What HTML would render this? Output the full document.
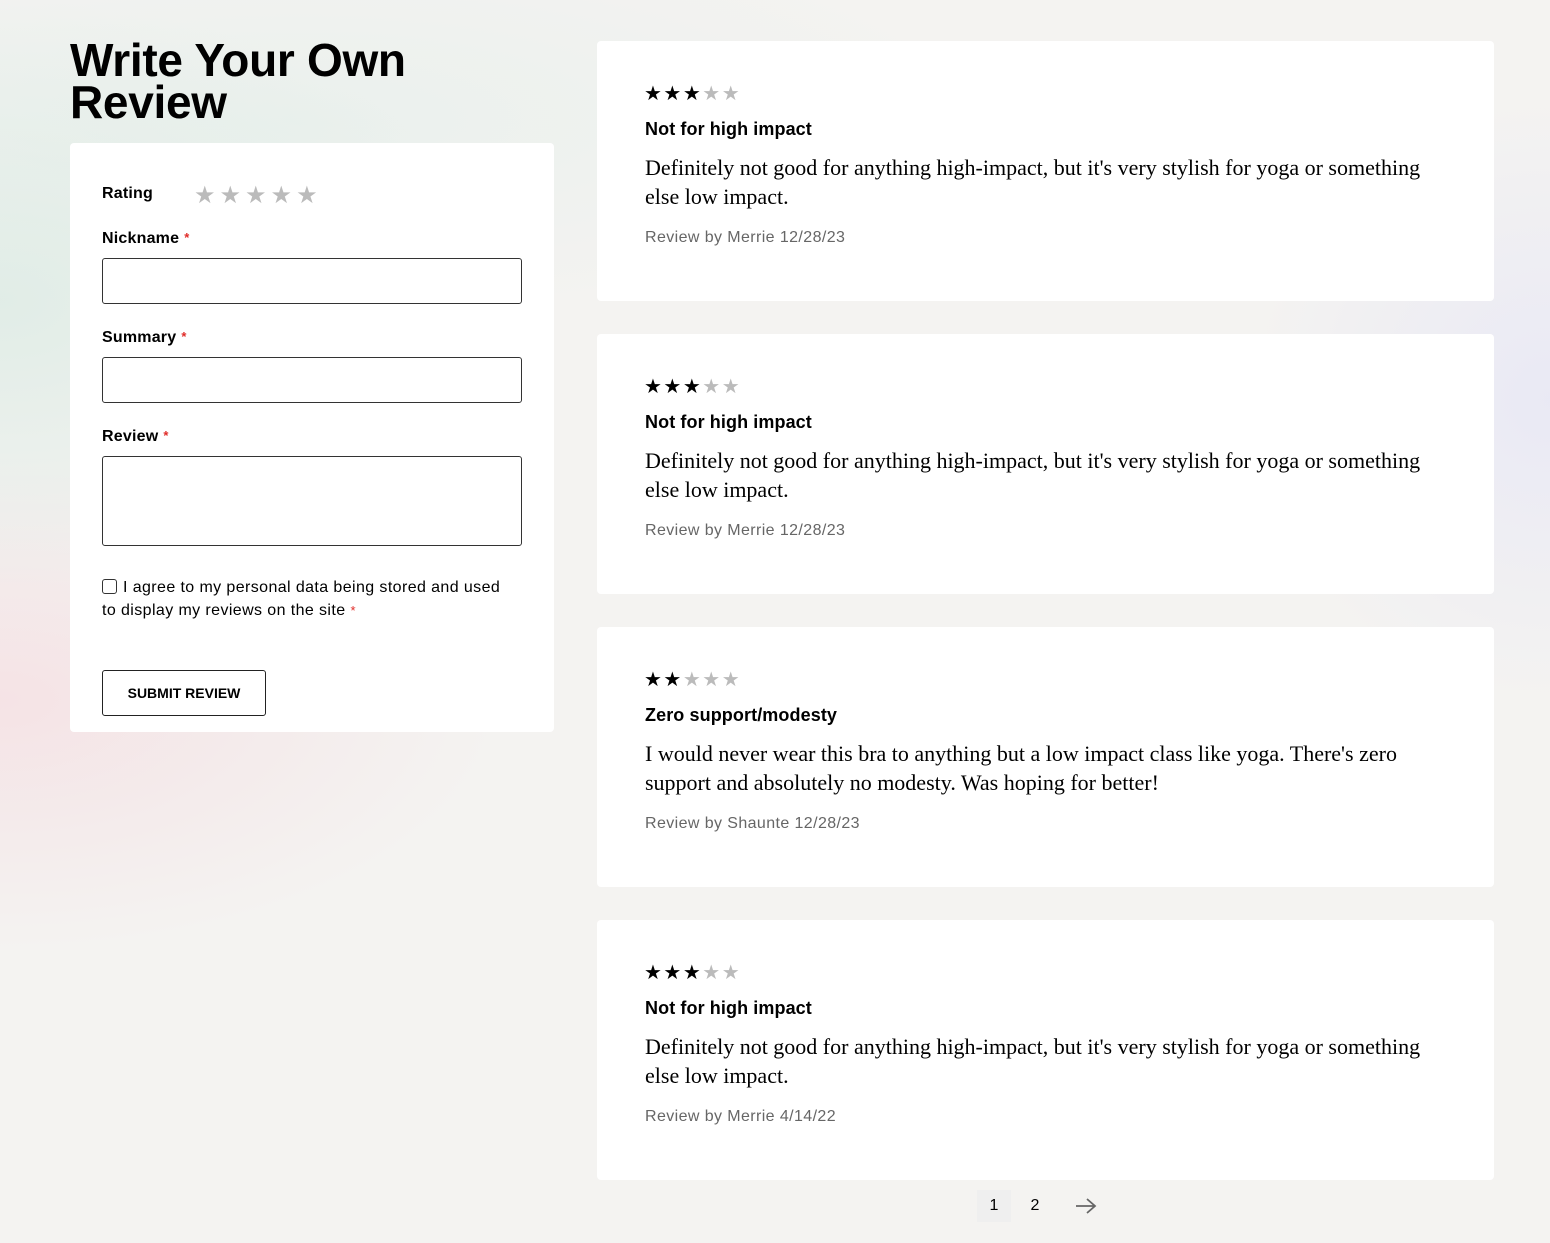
<!DOCTYPE html>
<html><head><meta charset="utf-8"><style>
*{box-sizing:border-box;margin:0;padding:0}
body{width:1550px;height:1243px;overflow:hidden;font-family:"Liberation Sans",sans-serif;color:#000;
background:
radial-gradient(ellipse 500px 300px at 0px 300px,rgba(220,235,228,.8),transparent),
radial-gradient(ellipse 500px 250px at 0px 700px,rgba(245,225,228,.9),transparent),
radial-gradient(ellipse 300px 300px at 1550px 400px,rgba(232,232,245,.9),transparent),
radial-gradient(ellipse 700px 200px at 300px 120px,rgba(232,240,236,.8),transparent),
#f4f3f1;position:relative}
h1{position:absolute;left:70px;top:39px;font-size:46px;line-height:42px;font-weight:bold;letter-spacing:-.3px}
.form{position:absolute;left:70px;top:143px;width:484px;height:589px;background:#fff;border-radius:4px}
.lbl{position:absolute;left:32px;font-size:16px;font-weight:bold;letter-spacing:.2px}
.req{color:#e02b27;font-size:13px;margin-left:5px;vertical-align:top}
.inp{position:absolute;left:32px;width:420px;height:46px;border:1px solid #333;border-radius:3px}
.gstars{position:absolute;left:124px;top:38px;color:#bbb;font-size:24px;letter-spacing:4px}
.card{position:absolute;left:597px;width:897px;height:260px;background:#fff;border-radius:4px}
.st{position:absolute;left:47px;top:40px;font-size:20px;letter-spacing:1.5px}
.st .o{color:#bbb}
.t{position:absolute;left:48px;top:78px;font-size:18px;font-weight:bold;letter-spacing:.1px}
.b{position:absolute;left:48px;top:112px;width:790px;font-family:"Liberation Serif",serif;font-size:22px;line-height:29px}
.m{position:absolute;left:48px;top:188px;font-size:16px;color:#666;letter-spacing:.4px}
.btn{position:absolute;left:32px;top:527px;width:164px;height:46px;border:1px solid #222;border-radius:3px;font-size:14px;font-weight:bold;text-align:center;line-height:44px}
</style></head><body>
<h1>Write Your Own<br>Review</h1>
<div class="form">
<div class="lbl" style="top:42px">Rating</div>
<div class="gstars">★★★★★</div>
<div class="lbl" style="top:87px">Nickname<span class="req">*</span></div>
<div class="inp" style="top:115px"></div>
<div class="lbl" style="top:186px">Summary<span class="req">*</span></div>
<div class="inp" style="top:214px"></div>
<div class="lbl" style="top:285px">Review<span class="req">*</span></div>
<div class="inp" style="top:313px;height:90px"></div>
<div style="position:absolute;left:32px;top:436px;width:15px;height:15px;border:1px solid #333;border-radius:3px"></div>
<div style="position:absolute;left:32px;top:433px;width:408px;font-size:16px;line-height:23px;text-indent:21px;letter-spacing:.4px">I agree to my personal data being stored and used to display my reviews on the site<span class="req">*</span></div>
<div class="btn">SUBMIT REVIEW</div>
</div>
<div class="card" style="top:41px"><div class="st">★★★<span class="o">★★</span></div><div class="t">Not for high impact</div><div class="b">Definitely not good for anything high-impact, but it's very stylish for yoga or something else low impact.</div><div class="m">Review by Merrie 12/28/23</div></div>
<div class="card" style="top:334px"><div class="st">★★★<span class="o">★★</span></div><div class="t">Not for high impact</div><div class="b">Definitely not good for anything high-impact, but it's very stylish for yoga or something else low impact.</div><div class="m">Review by Merrie 12/28/23</div></div>
<div class="card" style="top:627px"><div class="st">★★<span class="o">★★★</span></div><div class="t">Zero support/modesty</div><div class="b">I would never wear this bra to anything but a low impact class like yoga. There's zero support and absolutely no modesty. Was hoping for better!</div><div class="m">Review by Shaunte 12/28/23</div></div>
<div class="card" style="top:920px"><div class="st">★★★<span class="o">★★</span></div><div class="t">Not for high impact</div><div class="b">Definitely not good for anything high-impact, but it's very stylish for yoga or something else low impact.</div><div class="m">Review by Merrie 4/14/22</div></div>
<div style="position:absolute;left:977px;top:1190px;width:34px;height:32px;background:#efefef;text-align:center;line-height:32px;font-size:16px">1</div>
<div style="position:absolute;left:1020px;top:1190px;width:30px;line-height:32px;text-align:center;font-size:16px">2</div>
<svg style="position:absolute;left:1074px;top:1196px" width="24" height="20" viewBox="0 0 24 20"><path d="M2 10H21M13 3l8 7-8 7" fill="none" stroke="#666" stroke-width="1.8"/></svg>
</body></html>
